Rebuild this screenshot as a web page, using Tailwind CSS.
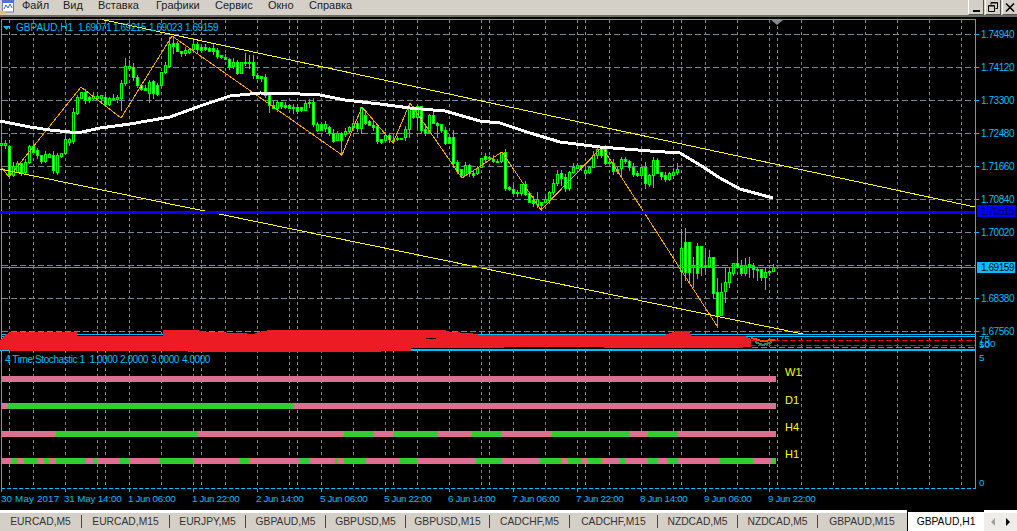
<!DOCTYPE html>
<html lang="ru">
<head>
<meta charset="UTF-8">
<title>GBPAUD,H1</title>
<script src="https://cdn.jsdelivr.net/npm/@tailwindcss/browser@4"></script>
</head>
<body class="bg-black overflow-hidden font-['Liberation_Sans',sans-serif]">
<div class="flex flex-col w-[1017px] h-[531px]">

  <!-- menu -->
  <div class="flex items-start justify-between h-[17px] bg-[#d4d0c8] border-b-2 border-[#6f6d68] text-[11px] leading-[11px] text-[#222] shrink-0">
    <div class="flex items-start">
      <svg class="w-[16px] h-[15px]" viewBox="0 0 16 15">
        <rect x="2.5" y="0" width="11" height="12" fill="#fff" stroke="#6a7fb5"/>
        <rect x="2" y="0" width="12" height="3" fill="#4f76c9"/>
        <path d="M4 9 L6 5 L8 8 L10 4 L12 8" fill="none" stroke="#3b62b8"/>
        <rect x="0" y="11" width="5" height="3" fill="#e8c35a"/>
      </svg>
      <div class="flex pl-[6px]">
        <span class="w-[41px]">Файл</span><span class="w-[35px]">Вид</span><span class="w-[58px]">Вставка</span><span class="w-[59px]">Графики</span><span class="w-[53px]">Сервис</span><span class="w-[41px]">Окно</span><span class="w-[43px]">Справка</span>
      </div>
    </div>
    <div class="flex gap-[1px] h-[15px] items-start">
      <div class="flex items-end justify-center w-[16px] h-[15px] bg-[#d4d0c8] border-r border-b border-[#555] border-l-white border-l pb-[2px]"><div class="w-[7px] h-[2px] bg-black"></div></div>
      <div class="flex items-center justify-center w-[16px] h-[15px] bg-[#d4d0c8] border-r border-b border-[#555] border-l-white border-l">
        <svg class="w-[10px] h-[10px]" viewBox="0 0 10 10"><path d="M3 2.5V.5H9.5V6.5H7.5M.5 3.5H6.5V9.5H.5Z" fill="none" stroke="#000"/><path d="M3 1H9M1 4H6" stroke="#000"/></svg>
      </div>
      <div class="flex items-center justify-center w-[15px] h-[15px] bg-[#d4d0c8] border-b border-[#555] border-l-white border-l">
        <svg class="w-[10px] h-[9px]" viewBox="0 0 10 9"><path d="M1 0.5L9 8.5M9 0.5L1 8.5" fill="none" stroke="#000" stroke-width="1.5"/></svg>
      </div>
    </div>
  </div>

  <!-- chart -->
  <div class="h-[493px] shrink-0 bg-black">
    <svg id="chart" class="block" width="1017" height="493" viewBox="0 17 1017 493"></svg>
  </div>

  <!-- tabs -->
  <div class="flex h-[21px] shrink-0 border-t-[3px] border-white bg-[#d4d0c8] text-[10.3px] text-[#333] relative">
    <div class="flex items-center h-[16px]">
      <div class="w-[82px] text-center border-r border-[#444] h-[13px] leading-[13px]">EURCAD,M5</div>
      <div class="w-[88px] text-center border-r border-[#444] h-[13px] leading-[13px]">EURCAD,M15</div>
      <div class="w-[76px] text-center border-r border-[#444] h-[13px] leading-[13px]">EURJPY,M5</div>
      <div class="w-[80px] text-center border-r border-[#444] h-[13px] leading-[13px]">GBPAUD,M5</div>
      <div class="w-[80px] text-center border-r border-[#444] h-[13px] leading-[13px]">GBPUSD,M5</div>
      <div class="w-[84px] text-center border-r border-[#444] h-[13px] leading-[13px]">GBPUSD,M15</div>
      <div class="w-[80px] text-center border-r border-[#444] h-[13px] leading-[13px]">CADCHF,M5</div>
      <div class="w-[88px] text-center border-r border-[#444] h-[13px] leading-[13px]">CADCHF,M15</div>
      <div class="w-[80px] text-center border-r border-[#444] h-[13px] leading-[13px]">NZDCAD,M5</div>
      <div class="w-[80px] text-center border-r border-[#444] h-[13px] leading-[13px]">NZDCAD,M5</div>
      <div class="w-[88px] text-center h-[13px] leading-[13px]">GBPAUD,M15</div>
    </div>
    <div class="w-[77px] h-[21px] -mt-[3px] ml-[1px] bg-white border-t-2 border-l border-black text-center text-black leading-[19px]">GBPAUD,H1</div>
    <div class="flex flex-1 items-center justify-around h-[18px] bg-[#eeedea] px-[2px]">
      <div class="w-0 h-0 border-y-[4px] border-y-transparent border-r-[4px] border-r-[#a0a0a0]"></div>
      <div class="w-0 h-0 border-y-[4px] border-y-transparent border-l-[4px] border-l-black"></div>
    </div>
  </div>
</div>

<script>
  // bodies read off the chart, [top, bottom, bear, wickTop, wickBottom], y given in zoomed pixels
  var sec1 = [[430,434,0],[430,434,0],[437,525,1],[498,525,0],[490,515,0],[490,515,1],[485,515,0],[437,485,0],[437,455,1],[450,465,1],[465,483,1],[463,483,0],[463,470,0],[465,510,1],[465,515,0],[458,467,0],[418,458,0],[418,425,0],[335,423,0],[290,340,0],[275,295,0],[277,300,1],[290,300,1],[288,295,0],[288,295,0],[285,295,0],[290,312,1],[295,312,0],[293,298,0],[290,298,0],[250,295,0,240,330],[198,250,0,175,255],[198,203,0,180,210],[200,232,1],[232,255,1],[255,268,1],[265,270,1],[245,280,0,240,305],[243,280,1,240,295],[255,283,1],[215,255,0],[195,215,0,185,220],[132,198,0,110,200],[130,137,1,110,160],[130,153,1],[152,160,1],[150,160,0],[148,157,0],[132,148,0],[132,146,1],[140,150,1],[140,148,1],[143,152,1],[145,153,1],[150,168,1],[165,172,1],[172,178,1],[178,198,1],[185,198,0],[185,220,1],[187,220,0],[187,190,0,158,195],[187,190,1,165,205],[187,225,1,165,235],[225,235,1],[228,235,1],[230,285,1],[285,315,1,285,335],[315,325,1],[305,325,0],[307,317,1],[315,322,1],[315,325,1],[320,325,1,312,340],[322,332,1],[322,330,1],[310,330,0],[307,310,1,298,320],[307,372,1],[372,390,0],[372,390,1],[372,385,0],[382,398,1],[398,422,1],[400,420,0],[400,420,1,395,465],[393,403,0],[380,393,0],[368,380,0],[368,383,1],[322,383,0,320,400],[345,368,1],[363,375,1],[375,380,1],[378,423,1],[418,425,1],[405,420,0],[405,418,1],[420,424,1]];
  var sec2 = [[175,178,0],[175,178,1],[148,172,0],[85,148,0,68,172],[90,112,1],[77,112,0,72,145],[78,150,1],[148,158,1],[105,155,0],[105,130,1],[130,135,1,125,170],[133,150,1],[150,190,1],[170,190,1],[172,248,1,150,260],[245,272,1],[268,285,1],[255,285,0],[255,280,1],[278,285,1,270,292],[263,278,0]];
  var sec3 = [[113,140,0],[108,118,1],[110,115,1],[118,123,1],[122,125,1],[97,122,0,95,125],[97,203,1],[202,208,1],[208,220,1],[215,220,1],[192,220,0],[192,222,1],[220,247,1],[240,250,1],[238,252,0,215,262],[247,255,1,247,272],[238,247,0],[217,240,0],[190,217,0],[163,190,0,150,195],[160,173,1,150,195],[172,205,1],[155,205,0],[142,155,0],[135,145,0],[135,142,1],[150,158,0],[140,155,0],[105,142,0],[88,105,0],[85,105,1],[85,130,1],[125,130,1],[128,152,1],[148,153,1],[118,145,0,112,165],[118,122,1,110,130],[122,140,1],[140,163,1],[160,165,1],[142,165,0],[142,190,1,125,205],[165,192,0],[120,165,0,112,200],[120,160,1],[157,167,1],[165,177,1],[158,177,0],[155,165,0],[148,155,0,130,162]];
  var sec4 = [[205,272,0,148,322],[187,275,1,145,300],[187,275,1,187,310],[255,260,0,230,320],[198,278,1,190,295],[198,262,1,198,285],[258,262,0,210,275],[232,258,0,210,262],[232,338,1,232,355],[335,405,1,295,440],[335,405,0,310,405],[305,332,0,265,365],[277,305,0,265,320],[250,278,0,250,285],[250,262,1,205,262],[258,278,1,240,285],[255,280,0,235,285],[253,257,0,230,292],[257,268,1,250,290],[267,270,0,262,300],[268,290,1,268,300],[277,290,0,265,327],[272,277,0,270,285],[262,272,0,252,272]];

  var out = [];
  function line(x1, y1, x2, y2, col, dash) {
    out.push('<line x1="' + x1 + '" y1="' + y1 + '" x2="' + x2 + '" y2="' + y2 + '" stroke="' + col + '" stroke-width="1"' + (dash ? ' stroke-dasharray="' + dash + '"' : '') + ' shape-rendering="crispEdges"/>');
  }
  function rect(x, y, w, h, col) {
    out.push('<rect x="' + x + '" y="' + y + '" width="' + w + '" height="' + h + '" fill="' + col + '" shape-rendering="crispEdges"/>');
  }
  function text(x, y, s, col, size, track) {
    out.push('<text x="' + x + '" y="' + y + '" fill="' + col + '" font-size="' + size + '" letter-spacing="' + (track || 0) + '" font-family="Liberation Sans, sans-serif">' + s + '</text>');
  }
  function poly(pts, col, w) {
    out.push('<polyline points="' + pts + '" fill="none" stroke="' + col + '" stroke-width="' + w + '" shape-rendering="crispEdges"/>');
  }
  var sky = '#00bfff', grid = '#778899';

  // grid
  [34, 67, 100, 133, 166, 199, 232, 265, 298, 331].forEach(function (y) { line(2, y + .5, 975, y + .5, grid, '6 3'); });
  for (var x = 33; x <= 961; x += 32) line(x + .5, 20, x + .5, 488, grid, '3 3');
  for (x = 9; x <= 777; x += 96) line(x + .5, 20, x + .5, 488, sky, '3 3');

  // frame
  line(1, 19.5, 976, 19.5, sky);
  line(1.5, 19, 1.5, 488, sky);
  line(975.5, 19, 975.5, 488, sky);
  line(1, 488.5, 976, 488.5, sky, '4 2');
  out.push('<polygon points="771,20 783,20 777,25" fill="#7f8c94"/>');

  // candles
  function draw(list, col0, scale, offs) {
    list.forEach(function (c, i) {
      var col = col0 + i * 4, k = (col - 1) / 4;
      var t = Math.round(offs + c[0] / scale), b = Math.round(offs + c[1] / scale);
      var wt = c[3] !== undefined ? Math.round(offs + c[3] / scale) : t - (k * 13 % 5);
      var wb = c[4] !== undefined ? Math.round(offs + c[4] / scale) : b + (k * 11 % 4);
      rect(col, wt, 1, wb - wt + 1, '#00ff00');
      rect(col - 1, t, 3, Math.max(b - t, 1) + 1, '#00ff00');
      if (b - t > 1) rect(col, t + 1, 1, b - t - 1, c[2] ? '#ffffff' : '#000000');
    });
  }
  draw(sec1, 1, 3, 0);
  draw(sec2, 397, 3, 80);
  draw(sec3, 481, 3, 120);
  draw(sec4, 681, 3, 180);

  // channel, zigzag, average
  poly('102,19.5 975,207', '#ffff00', 1);
  poly('0,169 803,334', '#ffff00', 1);
  poly('2,168 9,177 81,87 121,118 172,36 342,155 362,107 393,143 410,103 462,178 502,152 541,210 602,147 717,326', '#ffa500', 1);
  poly('0,121 15,124 30,127 50,130 70,132 82,132 100,128 130,124 170,117 200,106 230,96 260,93 300,94 320,95 345,100 380,104 410,108 445,111 480,121 500,123 530,133 560,142 600,147 650,151 680,153 700,165 720,178 740,189 773,198', '#ffffff', 3);

  // horizontal levels
  rect(0, 211, 975, 3, '#0000ff');
  line(2, 267.5, 975, 267.5, '#8a8a8a');
  line(2, 265.5, 975, 265.5, grid, '6 3');

  // separators of the small window
  rect(2, 334, 974, 1, sky);
  rect(2, 336, 974, 1, sky);
  rect(0, 349, 976, 2, sky);
  line(750, 340.5, 975, 340.5, '#ff0000', '5 3');
  line(750, 345.5, 975, 345.5, '#ff0000', '5 3');
  line(752, 347.5, 975, 347.5, grid, '6 3');
  out.push('<polygon fill="#ed1c24" shape-rendering="crispEdges" points="0,340 7,334 10,332 77,332 77,336 130,336 163,336 163,330 195,330 210,332 240,333 254,334 258,332 270,330 444,330 450,332 470,333 480,335 560,335 665,335 670,333 677,331 690,331 691,336 745,336 751,339 751,347 735,348 608,348 600,347 411,348 411,351 350,352 20,351 0,350"/>');
  rect(426, 338, 10, 1, '#000');
  poly('751,338 762,341 775,340', '#ff4500', 2);
  poly('755,342 763,345 772,342', '#2e8b57', 2);

  // stochastic rows
  var P = '#db7093', G = '#32cd32';
  function row(y, segs) { segs.forEach(function (s) { rect(s[0], y, s[1] - s[0], 6, s[2] ? G : P); }); }
  row(376, [[1, 776, 0]]);
  row(403, [[1, 8, 0], [8, 294, 1], [294, 776, 0]]);
  row(431, [[1, 56, 0], [56, 198, 1], [198, 344, 0], [344, 374, 1], [374, 393, 0], [393, 438, 1], [438, 472, 0], [472, 502, 1], [502, 552, 0], [552, 630, 1], [630, 648, 0], [648, 678, 1], [678, 776, 0]]);
  row(458, [[1, 12, 0], [12, 18, 1], [18, 24, 0], [24, 38, 1], [38, 44, 0], [44, 49, 1], [49, 56, 0], [56, 86, 1], [86, 93, 0], [93, 97, 1], [97, 120, 0], [120, 130, 1], [130, 160, 0], [160, 193, 1], [193, 240, 0], [240, 250, 1], [250, 300, 0], [300, 310, 1], [310, 335, 0], [335, 338, 1], [338, 344, 0], [344, 366, 1], [366, 400, 0], [400, 418, 1], [418, 476, 0], [476, 502, 1], [502, 540, 0], [540, 562, 1], [562, 568, 0], [568, 582, 1], [582, 588, 0], [588, 602, 1], [602, 620, 0], [620, 626, 1], [626, 648, 0], [648, 658, 1], [658, 668, 0], [668, 678, 1], [678, 720, 0], [720, 754, 1], [754, 772, 0], [772, 776, 1]]);
  ['W1', 'D1', 'H4', 'H1'].forEach(function (s, i) { text(785, [376, 404, 431, 458][i], s, '#ffff00', 11); });

  // legends
  out.push('<polygon points="3,26 10,26 6.5,30" fill="' + sky + '"/>');
  text(16, 31, 'GBPAUD,H1', sky, 10);
  ['1.69071', '1.69215', '1.69023', '1.69159'].forEach(function (s, i) { text([78, 113, 149, 185][i], 31, s, sky, 10, -0.45); });
  text(5, 363, '4 Time Stochastic 1', sky, 10, -0.4);
  ['1.0000', '2.0000', '3.0000', '4.0000'].forEach(function (s, i) { text([89.5, 120, 151, 182][i], 363, s, sky, 10, -0.45); });

  // price axis
  [['1.74940', 34], ['1.74120', 67], ['1.73300', 100], ['1.72480', 133], ['1.71660', 166], ['1.70840', 199], ['1.70020', 232], ['1.68380', 298], ['1.67560', 331]].forEach(function (p) {
    line(976, p[1] + .5, 979, p[1] + .5, sky);
    text(981, p[1] + 4, p[0], sky, 10, -0.45);
  });
  rect(977, 205, 38, 12, '#0000ff');
  text(981, 215, '1.70515', '#000033', 10, -0.45);
  rect(977, 262, 38, 11, sky);
  text(981, 271, '1.69159', '#000000', 10, -0.45);
  text(979, 342, '75', sky, 9.8);
  text(979, 347, '100', sky, 9.8);
  text(979, 348, '50', sky, 9.8);
  text(979, 361, '5', sky, 9.8);
  text(979, 486, '0', sky, 9.8);

  // time axis
  ['30 May 2017', '31 May 14:00', '1 Jun 06:00', '1 Jun 22:00', '2 Jun 14:00', '5 Jun 06:00', '5 Jun 22:00', '6 Jun 14:00', '7 Jun 06:00', '7 Jun 22:00', '8 Jun 14:00', '9 Jun 06:00', '9 Jun 22:00'].forEach(function (s, i) {
    line(1 + 64 * i + .5, 489, 1 + 64 * i + .5, 492, sky);
    text(i ? 64 * i : 1, 502, s, sky, 9.8, i == 0 ? 0.15 : i == 1 ? -0.15 : -0.35);
  });

  document.getElementById('chart').innerHTML = out.join('');
</script>
</body>
</html>
